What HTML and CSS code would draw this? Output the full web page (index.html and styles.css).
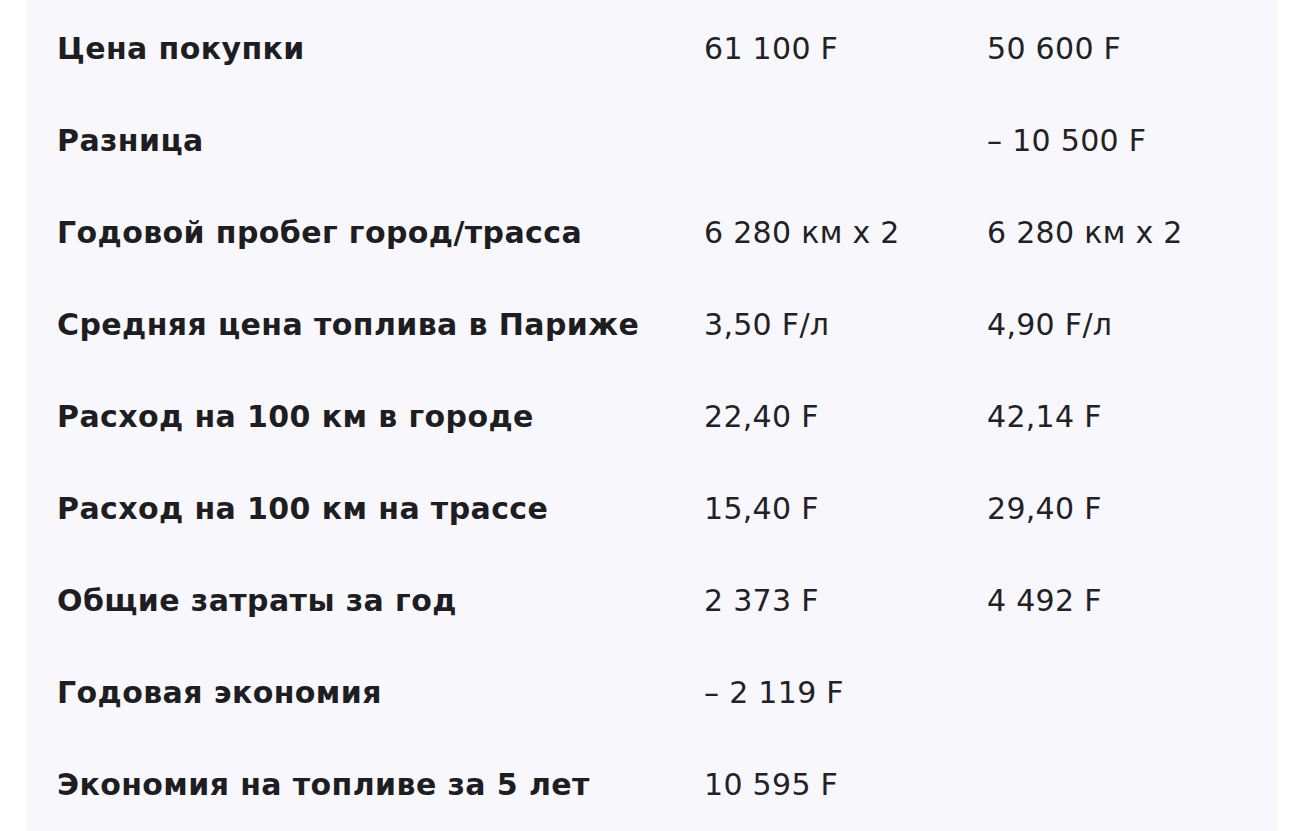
FILE: index.html
```html
<!DOCTYPE html>
<html lang="ru">
<head>
<meta charset="utf-8">
<title>Сравнение затрат</title>
<link rel="stylesheet" href="styles.css">
</head>
<body>
<div class="panel">
  <div class="table">
    <div class="label">Цена покупки</div><div class="val">61 100 F</div><div class="val">50 600 F</div>
    <div class="label">Разница</div><div class="val"></div><div class="val">– 10 500 F</div>
    <div class="label">Годовой пробег город/трасса</div><div class="val">6 280 км x 2</div><div class="val">6 280 км x 2</div>
    <div class="label">Средняя цена топлива в Париже</div><div class="val">3,50 F/л</div><div class="val">4,90 F/л</div>
    <div class="label">Расход на 100 км в городе</div><div class="val">22,40 F</div><div class="val">42,14 F</div>
    <div class="label">Расход на 100 км на трассе</div><div class="val">15,40 F</div><div class="val">29,40 F</div>
    <div class="label">Общие затраты за год</div><div class="val">2 373 F</div><div class="val">4 492 F</div>
    <div class="label">Годовая экономия</div><div class="val">– 2 119 F</div><div class="val"></div>
    <div class="label">Экономия на топливе за 5 лет</div><div class="val">10 595 F</div><div class="val"></div>
  </div>
</div>
</body>
</html>
```
FILE: styles.css
```css
html, body {
  margin: 0;
  padding: 0;
  background: #ffffff;
}
body {
  font-family: "DejaVu Sans", Inter, sans-serif;
  color: #1e1e22;
}
.panel {
  margin-left: 27px;
  width: 1250px;
  height: 831px;
  background: #f8f8fc;
  box-sizing: border-box;
  padding: 3px 0 0 30px;
}
.table {
  display: grid;
  grid-template-columns: 647px 283px 1fr;
  grid-auto-rows: 91.9px;
  align-items: center;
}
.label {
  font-size: 30px;
  font-weight: 700;
  letter-spacing: 0.4px;
  white-space: nowrap;
}
.val {
  font-size: 30px;
  font-weight: 400;
  letter-spacing: 0.3px;
  white-space: nowrap;
  color: #222226;
}
```
